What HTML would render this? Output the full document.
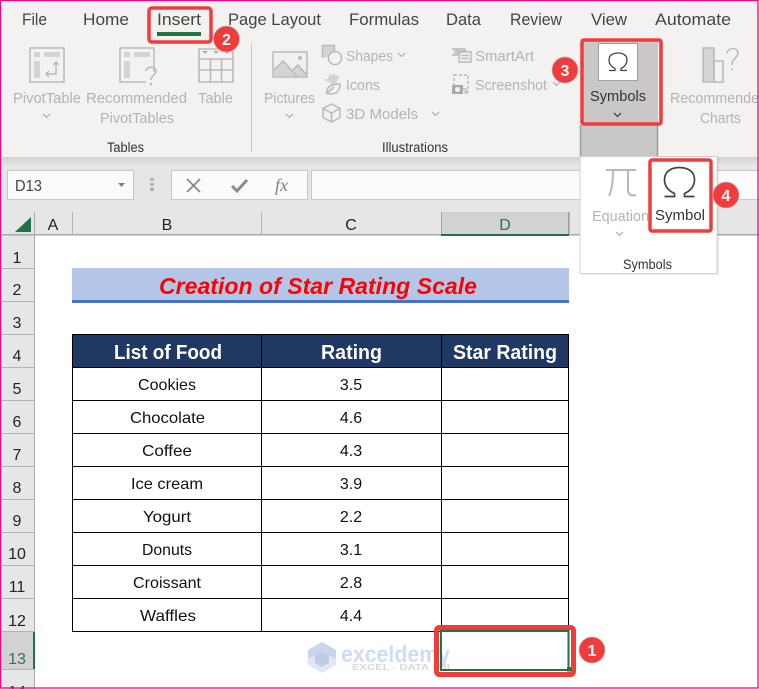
<!DOCTYPE html>
<html><head><meta charset="utf-8"><title>Excel</title>
<style>
html,body{margin:0;padding:0;background:#fff}
svg{display:block}
text{font-family:"Liberation Sans",sans-serif}
.tab{font-size:16.5px;fill:#444}
.g{font-size:14.5px;fill:#b3b3b3}
.d{font-size:13.5px;fill:#333}
.h{font-size:16px;fill:#222;text-anchor:middle}
.v{font-size:16px;fill:#111}
.c{font-size:16px;fill:#111;text-anchor:middle}
.th{font-size:20px;font-weight:bold;fill:#fff}
.n{font-size:16px;font-weight:bold;fill:#fff;text-anchor:middle}
.ic{fill:none;stroke:#b9b9b9;stroke-width:1.500}
.if{fill:#d4d4d4}
</style></head>
<body>
<svg xmlns="http://www.w3.org/2000/svg" width="759" height="689" viewBox="0 0 759 689">
<defs><linearGradient id="sh" x1="0" y1="0" x2="0" y2="1"><stop offset="0" stop-color="#d2d1cf"/><stop offset="1" stop-color="#e6e6e6"/></linearGradient></defs>
<rect width="759" height="689" fill="#fff"/>
<!-- ribbon -->
<rect width="759" height="157" fill="#f3f2f1"/>
<rect y="157" width="759" height="55" fill="#e6e6e6"/>
<rect y="157" width="759" height="8" fill="url(#sh)"/>
<text class="tab" x="22" y="25" textLength="25" lengthAdjust="spacingAndGlyphs">File</text>
<text class="tab" x="83" y="25" textLength="46" lengthAdjust="spacingAndGlyphs">Home</text>
<text class="tab" x="157" y="25" textLength="44" lengthAdjust="spacingAndGlyphs">Insert</text>
<text class="tab" x="228" y="25" textLength="93" lengthAdjust="spacingAndGlyphs">Page Layout</text>
<text class="tab" x="349" y="25" textLength="70" lengthAdjust="spacingAndGlyphs">Formulas</text>
<text class="tab" x="446" y="25" textLength="35" lengthAdjust="spacingAndGlyphs">Data</text>
<text class="tab" x="510" y="25" textLength="52" lengthAdjust="spacingAndGlyphs">Review</text>
<text class="tab" x="591" y="25" textLength="36" lengthAdjust="spacingAndGlyphs">View</text>
<text class="tab" x="655" y="25" textLength="76" lengthAdjust="spacingAndGlyphs">Automate</text>
<rect x="157" y="32" width="44" height="4" fill="#217346"/>

<!-- PivotTable icon -->
<rect class="ic" x="30" y="48" width="34" height="34" stroke-width="2"/>
<rect class="if" x="34" y="52" width="6" height="5"/><rect class="if" x="44" y="52" width="16" height="5"/><rect class="if" x="34" y="61" width="6" height="17"/>
<path class="ic" d="M59 65l-3-3-3 3M56 62v12h-10M49 71l-3 3 3 3"/>
<!-- Recommended icon -->
<path class="ic" d="M146 82h-26v-34h34v24" stroke-width="2"/>
<rect class="if" x="124" y="52" width="6" height="5"/><rect class="if" x="134" y="52" width="16" height="5"/><rect class="if" x="124" y="61" width="6" height="17"/>
<path class="ic" d="M146 71c0-5 10-5 10 0 0 4-5 4-5 9" stroke-width="1.800"/><circle cx="151" cy="84" r="1.300" fill="#b9b9b9"/>
<!-- Table icon -->
<path d="M199 49h34v33h-34zM199 59h34M199 70h34M210.500 59v23M221.500 59v23" fill="none" stroke="#b9b9b9" stroke-width="1.600"/>
<path d="M202 51h6l-3 3zM213 51h6l-3 3zM224 51h6l-3 3z" fill="#b0b0b0"/>
<!-- Pictures -->
<rect class="if" x="274" y="53" width="32" height="23" style="fill:#f0f0f0"/>
<path class="if" d="M274 76v-7l9-9 14 16z"/><path class="if" d="M293 70l5-5 8 8v3h-8z"/>
<rect class="ic" x="273" y="52" width="34" height="25" stroke-width="2"/>
<path class="ic" d="M274 70l9-9 14 15M293 70l5-5 8 9"/><circle cx="300" cy="58" r="2" fill="#b9b9b9"/>
<!-- Shapes -->
<path class="if" d="M322.500 45.500h12v6c-3 1-5 3-6 6h-6z"/><path class="ic" d="M322.500 58v-12.500h12v5"/>
<circle class="ic" cx="335" cy="58" r="6.500"/>
<!-- Icons -->
<path class="if" d="M323 80c2-1 4-1 5-1 0-3 2-5 5-5 2 0 3 1 4 2l3-1-2 4c0 3-3 5-6 6-2-3-5-4-9-5z"/>
<path class="ic" d="M327 93c-1-5 3-9 13-9 0 6-3 10-9 10-2 0-3-1-4-1zM326 94l8-7"/>
<!-- 3D -->
<path class="ic" d="M331.500 104l8.500 4.500v9l-8.500 4.500-8.500-4.500v-9zM323 108.500l8.500 4.500 8.500-4.500M331.500 113v9"/>
<!-- SmartArt -->
<path class="if" d="M451 48h14l3 4h-6l-4 4h-7l4-4z" style="fill:#c4c4c4"/><rect class="ic" x="459" y="52" width="12" height="10" fill="#f3f2f1" stroke-width="1.400"/>
<path class="ic" d="M461 55.500h8M461 58.500h8" stroke-width="1"/>
<!-- Screenshot -->
<rect class="ic" x="454" y="75" width="14" height="14" stroke-dasharray="3 2" stroke-width="1.400"/>
<rect x="452" y="85" width="11" height="9" fill="#a9a9a9"/><circle cx="457.500" cy="89.500" r="2.500" fill="#f3f2f1"/>
<path class="ic" d="M464 92h5M466.500 89.500v5" stroke-width="1.200"/>
<!-- Ribbon labels -->
<text class="g" x="13" y="103" textLength="68" lengthAdjust="spacingAndGlyphs">PivotTable</text>
<text class="g" x="86" y="103" textLength="101" lengthAdjust="spacingAndGlyphs">Recommended</text>
<text class="g" x="100" y="123" textLength="74" lengthAdjust="spacingAndGlyphs">PivotTables</text>
<text class="g" x="198" y="103" textLength="35" lengthAdjust="spacingAndGlyphs">Table</text>
<text class="g" x="264" y="103" textLength="51" lengthAdjust="spacingAndGlyphs">Pictures</text>
<text class="g" x="346" y="61" textLength="47" lengthAdjust="spacingAndGlyphs">Shapes</text>
<text class="g" x="346" y="90" textLength="34" lengthAdjust="spacingAndGlyphs">Icons</text>
<text class="g" x="346" y="119" textLength="72" lengthAdjust="spacingAndGlyphs">3D Models</text>
<text class="g" x="475" y="61" textLength="59" lengthAdjust="spacingAndGlyphs">SmartArt</text>
<text class="g" x="475" y="90" textLength="72" lengthAdjust="spacingAndGlyphs">Screenshot</text>
<text class="g" x="670" y="103" textLength="89" lengthAdjust="spacingAndGlyphs">Recommende</text>
<text class="g" x="700" y="123" textLength="41" lengthAdjust="spacingAndGlyphs">Charts</text>
<text class="d" x="107" y="152" textLength="37" lengthAdjust="spacingAndGlyphs">Tables</text>
<text class="d" x="382" y="152" textLength="66" lengthAdjust="spacingAndGlyphs">Illustrations</text>
<path d="M43 114l3.500 3.500 3.500-3.500M286 114l3.500 3.500 3.500-3.500M398 53l3.500 3.500 3.500-3.500M553 82l3.500 3.500 3.500-3.500M432 112l3.500 3.500 3.500-3.500" fill="none" stroke="#a8a8a8" stroke-width="1.100"/>
<rect x="251" y="43" width="1" height="109" fill="#c8c8c8"/>
<!-- right chart icon -->
<rect class="if" x="703" y="48" width="11" height="34"/><rect x="703" y="48" width="11" height="34" class="ic"/>
<rect x="714" y="61" width="9" height="21" class="ic"/>
<path class="ic" d="M727 53c1-6 11-6 11 0 0 5-6 5-6 12" stroke-width="1.400"/><circle cx="732" cy="69" r="1" fill="#b9b9b9"/>

<!-- Symbols button -->
<rect x="581" y="39" width="77" height="118" fill="#cac8c6"/>
<path d="M580.500 125v32M657.500 125v32" stroke="#9c9c9c" stroke-width="1.500"/>
<rect x="598.500" y="43.500" width="39" height="37" fill="#fff" stroke="#a0a0a0"/>
<path d="M609 70.500h6v-2c-4-2-6-5-6-8.500 0-4.500 3.500-7 9-7s9 2.500 9 7c0 3.500-2 6.500-6 8.500v2h6" fill="none" stroke="#444" stroke-width="1.300"/>
<text x="590" y="101" font-size="14.500" fill="#333" textLength="56" lengthAdjust="spacingAndGlyphs">Symbols</text>
<path d="M614 113l3.500 3.500 3.500-3.500" fill="none" stroke="#333" stroke-width="1.200"/>

<!-- Formula bar -->
<rect x="7.500" y="170.500" width="126" height="29" fill="#fbfbfb" stroke="#c8c8c8"/>
<text x="15" y="191" font-size="15.500" fill="#444" textLength="27" lengthAdjust="spacingAndGlyphs">D13</text>
<path d="M118 183h7l-3.500 4z" fill="#808080"/>
<path d="M150 178h4v3h-4zM150 183h4v3h-4zM150 188h4v3h-4z" fill="#b4b4b4"/>
<rect x="171.500" y="170.500" width="136" height="29" fill="#fbfbfb" stroke="#c8c8c8"/>
<rect x="311.500" y="170.500" width="460" height="29" fill="#fbfbfb" stroke="#c8c8c8"/>
<path d="M187 179l13 13M200 179l-13 13" stroke="#8a8a8a" stroke-width="1.800"/>
<path d="M232 186l5 5 10-11" fill="none" stroke="#8a8a8a" stroke-width="3"/>
<text x="275" y="191" font-size="18" font-style="italic" fill="#808080" style="font-family:'Liberation Serif',serif">fx</text>

<!-- Headers -->
<rect y="212" width="759" height="23" fill="#e6e6e6"/>
<rect y="235" width="35" height="454" fill="#e6e6e6"/>
<rect x="0" y="234" width="759" height="1.500" fill="#a8a8a8"/>
<rect x="34" y="212" width="1" height="477" fill="#a8a8a8"/>
<path d="M31 217v15H15z" fill="#217346"/>
<path d="M72.500 212v23M261.500 212v23M441.500 212v23M569.500 212v23" stroke="#b4b4b4"/>
<rect x="441" y="212" width="128" height="23" fill="#d2d2d2"/>
<path d="M441.500 212v23M568.500 212v23" stroke="#a0a0a0"/>
<rect x="441" y="234" width="128" height="2" fill="#217346"/>
<text class="h" x="53" y="230">A</text><text class="h" x="167" y="230">B</text><text class="h" x="351" y="230">C</text>
<text class="h" x="505" y="230" style="fill:#2f6f6a">D</text>
<rect x="0" y="631" width="33" height="38" fill="#d2d2d2"/>
<rect x="33" y="631" width="2" height="38" fill="#217346"/>
<path d="M0 268.500h35M0 301.500h35M0 334.500h35M0 367.500h35M0 400.500h35M0 433.500h35M0 466.500h35M0 499.500h35M0 532.500h35M0 565.500h35M0 598.500h35M0 631.500h35M0 669.500h35" stroke="#b4b4b4"/>
<text class="h" x="17" y="263">1</text><text class="h" x="17" y="295">2</text><text class="h" x="17" y="328">3</text><text class="h" x="17" y="361">4</text><text class="h" x="17" y="394">5</text><text class="h" x="17" y="427">6</text><text class="h" x="17" y="460">7</text><text class="h" x="17" y="493">8</text><text class="h" x="17" y="526">9</text><text class="h" x="17" y="559">10</text><text class="h" x="17" y="592">11</text><text class="h" x="17" y="626">12</text><text class="h" x="17" y="664" style="fill:#2f6f6a">13</text><text class="h" x="17" y="697">14</text>

<!-- Title -->
<rect x="72" y="268" width="497" height="32" fill="#b4c6e7"/>
<rect x="72" y="300" width="497" height="3" fill="#4472c4"/>
<text x="159" y="294" font-size="23.500" font-weight="bold" font-style="italic" fill="#ff0000" textLength="318" lengthAdjust="spacingAndGlyphs">Creation of Star Rating Scale</text>

<!-- Table -->
<rect x="72" y="334" width="497" height="33" fill="#203864"/>
<path d="M72.500 334v298M261.500 334v298M441.500 334v298M568.500 334v298M72 334.500h497M72 367.500h497M72 400.500h497M72 433.500h497M72 466.500h497M72 499.500h497M72 532.500h497M72 565.500h497M72 598.500h497M72 631.500h497" stroke="#000" fill="none"/>
<text class="th" x="114" y="359" textLength="108" lengthAdjust="spacingAndGlyphs">List of Food</text>
<text class="th" x="321" y="359" textLength="61" lengthAdjust="spacingAndGlyphs">Rating</text>
<text class="th" x="453" y="359" textLength="104" lengthAdjust="spacingAndGlyphs">Star Rating</text>
<text class="v" x="138" y="390" textLength="58" lengthAdjust="spacingAndGlyphs">Cookies</text><text class="c" x="351" y="390">3.5</text>
<text class="v" x="130" y="423" textLength="75" lengthAdjust="spacingAndGlyphs">Chocolate</text><text class="c" x="351" y="423">4.6</text>
<text class="v" x="142" y="456" textLength="50" lengthAdjust="spacingAndGlyphs">Coffee</text><text class="c" x="351" y="456">4.3</text>
<text class="v" x="131" y="489" textLength="72" lengthAdjust="spacingAndGlyphs">Ice cream</text><text class="c" x="351" y="489">3.9</text>
<text class="v" x="143" y="522" textLength="48" lengthAdjust="spacingAndGlyphs">Yogurt</text><text class="c" x="351" y="522">2.2</text>
<text class="v" x="142" y="555" textLength="50" lengthAdjust="spacingAndGlyphs">Donuts</text><text class="c" x="351" y="555">3.1</text>
<text class="v" x="133" y="588" textLength="68" lengthAdjust="spacingAndGlyphs">Croissant</text><text class="c" x="351" y="588">2.8</text>
<text class="v" x="140" y="621" textLength="56" lengthAdjust="spacingAndGlyphs">Waffles</text><text class="c" x="351" y="621">4.4</text>

<!-- Watermark -->
<path d="M322 642l14 8v15l-14 8-14-8v-15z" fill="#dfe6f6"/>
<path d="M322 642l14 8v9l-14-8-14 8v-9z" fill="#c8d4f0"/>
<path d="M322 651l7 4v8l-7 4-7-4v-8z" fill="#b4c0d8" opacity=".7"/>
<text x="341" y="662" font-size="23" font-weight="bold" fill="#cfdcf8" textLength="109" lengthAdjust="spacingAndGlyphs">exceldemy</text>
<text x="352" y="670" font-size="8" font-weight="bold" fill="#d8d8d8" textLength="98" lengthAdjust="spacingAndGlyphs">EXCEL · DATA · BI</text>

<!-- Red box 1 and selection -->
<rect x="436.500" y="627.500" width="137" height="47" rx="3" fill="none" stroke="#f03c3c" stroke-width="5"/>
<rect x="441" y="631" width="127.500" height="39" fill="none" stroke="#217346" stroke-width="2"/>
<rect x="567" y="667" width="4.500" height="4.500" fill="#217346"/>

<!-- Dropdown -->
<rect x="582" y="158" width="137" height="117" fill="#000" opacity=".08"/>
<rect x="580" y="156.500" width="137" height="117" fill="#fff" stroke="#d0d0d0"/>
<path d="M606 170h30M613 170c0 10-1 20-4 26M628 170v20c0 5 3 6 8 5" fill="none" stroke="#b8b8b8" stroke-width="2"/>
<text x="592" y="221" font-size="14.500" fill="#b3b3b3" textLength="57" lengthAdjust="spacingAndGlyphs">Equation</text>
<path d="M616 232l3.500 3.500 3.500-3.500" fill="none" stroke="#aaa" stroke-width="1.100"/>
<rect x="651" y="161" width="59" height="69" fill="#fff"/>
<path d="M664.500 196.500h10v-3c-6.500-3-10-8-10-14 0-7.500 6-12 15-12s15 4.500 15 12c0 6-3.500 11-10 14v3h10" fill="none" stroke="#444" stroke-width="1.700"/>
<text x="655" y="220" font-size="14.500" fill="#333" textLength="50" lengthAdjust="spacingAndGlyphs">Symbol</text>
<text x="623" y="269" font-size="13.500" fill="#333" textLength="49" lengthAdjust="spacingAndGlyphs">Symbols</text>

<!-- Red boxes -->
<g fill="none" stroke="#f03c3c" stroke-width="3.500">
<rect x="149" y="8" width="62" height="34" rx="3"/>
<rect x="582" y="40" width="79" height="84" rx="2"/>
<rect x="650" y="160" width="61" height="71" rx="2"/>
</g>
<!-- Number circles -->
<g fill="#f03c3c" stroke="#bbb" stroke-width=".7">
<circle cx="226.500" cy="39" r="13"/><circle cx="565" cy="70" r="13"/><circle cx="726" cy="195" r="13"/><circle cx="592" cy="650" r="13"/>
</g>
<text class="n" x="226.500" y="45">2</text><text class="n" x="565" y="76">3</text><text class="n" x="726" y="201">4</text><text class="n" x="592" y="656">1</text>

<!-- Pink frame -->
<rect x=".5" y=".5" width="757.500" height="687.500" fill="none" stroke="#ff0080" stroke-width="1.300"/>
</svg>
</body></html>
